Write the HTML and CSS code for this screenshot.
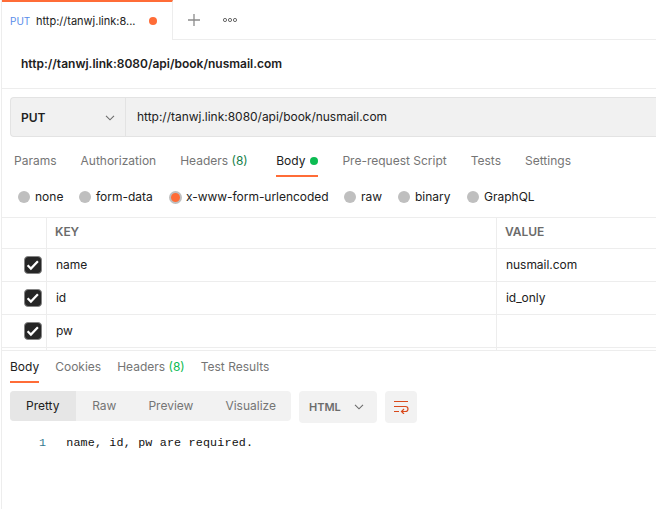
FILE: index.html
```html
<!DOCTYPE html>
<html lang="en">
<head>
<meta charset="utf-8">
<title>API client</title>
<link rel="stylesheet" href="styles.css">
</head>
<body>
<main class="app">
  <header class="tabbar">
    <div class="tab">
      <span class="tab-method">PUT</span>
      <span class="tab-name">http://tanwj.link:8...</span>
      <span class="unsaved"></span>
    </div>
    <div class="tab-actions">
      <svg class="plus" width="12" height="12" viewBox="0 0 12 12"><path d="M6 0v12M0 6h12"/></svg>
      <svg class="more" width="16" height="6" viewBox="0 0 16 6"><circle cx="3" cy="3" r="1.6"/><circle cx="8" cy="3" r="1.6"/><circle cx="13" cy="3" r="1.6"/></svg>
    </div>
  </header>
  <h1 class="title">http://tanwj.link:8080/api/book/nusmail.com</h1>
  <div class="urlbar">
    <div class="method"><span>PUT</span><svg class="chevron" width="10" height="6" viewBox="0 0 10 6"><path d="M1 .8l4 4 4-4"/></svg></div>
    <div class="url">http://tanwj.link:8080/api/book/nusmail.com</div>
  </div>
  <nav class="tabs request-tabs">
    <span>Params</span>
    <span>Authorization</span>
    <span class="headers">Headers <b class="count">(8)</b></span>
    <span class="active">Body<i class="status"></i></span>
    <span>Pre-request Script</span>
    <span>Tests</span>
    <span>Settings</span>
  </nav>
  <div class="modes">
    <span class="mode none"><i></i>none</span>
    <span class="mode form"><i></i>form-data</span>
    <span class="mode encoded selected"><i></i>x-www-form-urlencoded</span>
    <span class="mode raw"><i></i>raw</span>
    <span class="mode binary"><i></i>binary</span>
    <span class="mode graphql"><i></i>GraphQL</span>
  </div>
  <section class="grid">
    <div class="row head"><div></div><div>KEY</div><div>VALUE</div></div>
    <div class="row"><div><svg class="check" width="18" height="18" viewBox="0 0 18 18"><rect x=".5" y=".5" width="17" height="17" rx="3.5"/><path d="M3.6 9.3l3.3 3.3 7-7.4"/></svg></div><div>name</div><div>nusmail.com</div></div>
    <div class="row"><div><svg class="check" width="18" height="18" viewBox="0 0 18 18"><rect x=".5" y=".5" width="17" height="17" rx="3.5"/><path d="M3.6 9.3l3.3 3.3 7-7.4"/></svg></div><div>id</div><div>id_only</div></div>
    <div class="row"><div><svg class="check" width="18" height="18" viewBox="0 0 18 18"><rect x=".5" y=".5" width="17" height="17" rx="3.5"/><path d="M3.6 9.3l3.3 3.3 7-7.4"/></svg></div><div>pw</div><div></div></div>
    <div class="row cut"><div></div><div></div><div></div></div>
  </section>
  <nav class="tabs response-tabs">
    <span class="active">Body</span>
    <span>Cookies</span>
    <span>Headers <b class="count">(8)</b></span>
    <span>Test Results</span>
  </nav>
  <div class="toolbar">
    <div class="segmented"><span class="current">Pretty</span><span>Raw</span><span>Preview</span><span>Visualize</span></div>
    <div class="format"><span>HTML</span><svg class="chevron" width="10" height="6" viewBox="0 0 10 6"><path d="M1 .8l4 4 4-4"/></svg></div>
    <div class="wrap"><svg width="16" height="14" viewBox="0 0 16 14"><path d="M1 1.5h14M1 6.5h11.5a2.5 2.5 0 0 1 0 5H9M1 11.5h5M11 9l-2.5 2.5L11 14"/></svg></div>
  </div>
  <div class="code"><span class="line-number">1</span><code>name, id, pw are required.</code></div>
</main>
</body>
</html>
```
FILE: styles.css
```css
* { box-sizing: border-box; }
body {
  margin: 0;
  height: 509px;
  overflow: hidden;
  background: #fff;
  color: #212121;
  font: 12px/16px Inter, "Liberation Sans", sans-serif;
  white-space: nowrap;
}
svg { display: block; fill: none; }
.app { margin-left: 1px; height: 509px; border-left: 1px solid #ededed; }

.tabbar { display: flex; height: 40px; }
.tab {
  display: flex;
  align-items: center;
  width: 171px;
  padding: 0 0 0 8px;
  border-top: 2px solid #ff6c37;
  border-right: 1px solid #ededed;
  font-size: 11px;
}
.tab-method { width: 26px; color: #5a8dea; font-size: 10px; }
.tab-name { width: 113px; }
.unsaved { width: 8px; height: 8px; border-radius: 50%; background: #ff6c37; }
.tab-actions {
  display: flex;
  align-items: center;
  flex: 1;
  gap: 22px;
  padding-left: 15px;
  border-bottom: 1px solid #ededed;
}
.plus { stroke: #8c8c8c; stroke-width: 1.3; }
.more { stroke: #6b6b6b; stroke-width: 1; }

.title {
  height: 49px;
  margin: 0;
  padding: 16px 19px;
  border-bottom: 1px solid #ededed;
  font-size: 12px;
  font-weight: 600;
}

.urlbar {
  display: flex;
  height: 40px;
  margin: 8px 0 0 8px;
  border: 1px solid #e3e3e3;
  border-right: 0;
  border-radius: 4px 0 0 4px;
  background: #f1f1f1;
}
.method {
  display: flex;
  align-items: center;
  justify-content: space-between;
  width: 115px;
  padding: 2px 10px 0;
  border-right: 1px solid #e3e3e3;
  font-weight: 600;
}
.chevron { stroke: #6b6b6b; stroke-width: 1.1; }
.url { padding: 11px; letter-spacing: -.02px; }

.tabs { display: flex; color: #757575; }
.tabs .active { color: #212121; border-bottom: 2px solid #ff6c37; }
.count { font-weight: 400; color: #17804a; }
.request-tabs { gap: 24px; height: 40px; padding: 16px 12px 0; }
.request-tabs span { height: 24px; }
.request-tabs .headers { width: 72px; }
.status {
  display: inline-block;
  width: 8px;
  height: 8px;
  margin-left: 5px;
  border-radius: 50%;
  background: #0cbb52;
}

.modes { display: flex; height: 40px; padding: 12px 0 0 16px; }
.mode { display: flex; gap: 5px; }
.mode i { width: 12px; height: 12px; margin-top: 2px; border-radius: 50%; background: #bfbfbf; }
.mode.selected { gap: 4px; letter-spacing: -.04px; }
.mode.selected i { width: 13px; height: 13px; border: 2.5px solid #bfbfbf; background: #ff6c37; }
.none { width: 61px; }
.form { width: 90px; }
.encoded { width: 175px; }
.raw { width: 54px; }
.binary { width: 69px; }

.grid { height: 134px; border-top: 1px solid #ededed; border-bottom: 1px solid #ededed; overflow: hidden; }
.row { display: grid; grid-template-columns: 44px 450px 1fr; height: 33px; border-bottom: 1px solid #ededed; }
.row div { padding: 8px 9px; letter-spacing: -.04px; }
.row div + div { border-left: 1px solid #ededed; }
.row div:first-child { padding: 7px 0 0 22px; }
.head { height: 31px; color: #6b6b6b; font-weight: 600; }
.head div { padding: 6px 8px; }
.cut { height: 2px; border: 0; }
.row.cut div { padding: 0; }
.check rect { fill: #262626; stroke: #858585; }
.check path { stroke: #fff; stroke-width: 2.2; }

.response-tabs { gap: 16px; height: 32px; padding: 8px 8px 0; }
.response-tabs span { height: 24px; }
.response-tabs .count { color: #0cbb52; }
.toolbar { display: flex; height: 32px; gap: 8px; margin: 8px 0 0 8px; }
.segmented { display: flex; width: 281px; height: 30px; border-radius: 4px; overflow: hidden; background: #f2f2f2; color: #757575; }
.segmented span { padding: 7px 16px; }
.segmented .current { width: 66px; margin-right: .7px; background: #e6e6e6; color: #212121; }
.format {
  display: flex;
  align-items: center;
  justify-content: space-between;
  width: 78px;
  padding: 0 13px 0 10px;
  border-radius: 4px;
  background: #f2f2f2;
  color: #6b6b6b;
  font-size: 11px;
  font-weight: 600;
}
.wrap { display: grid; place-items: center; width: 32px; border-radius: 4px; background: #f2f2f2; }
.wrap path { stroke: #d94a1c; stroke-width: 1.2; }
.code { display: flex; gap: 20px; padding: 11px 0 0 37px; font: 11.7px/18px "Liberation Mono", monospace; letter-spacing: .18px; }
.code code { font: inherit; color: #111; }
.line-number { color: #34798f; }
```
